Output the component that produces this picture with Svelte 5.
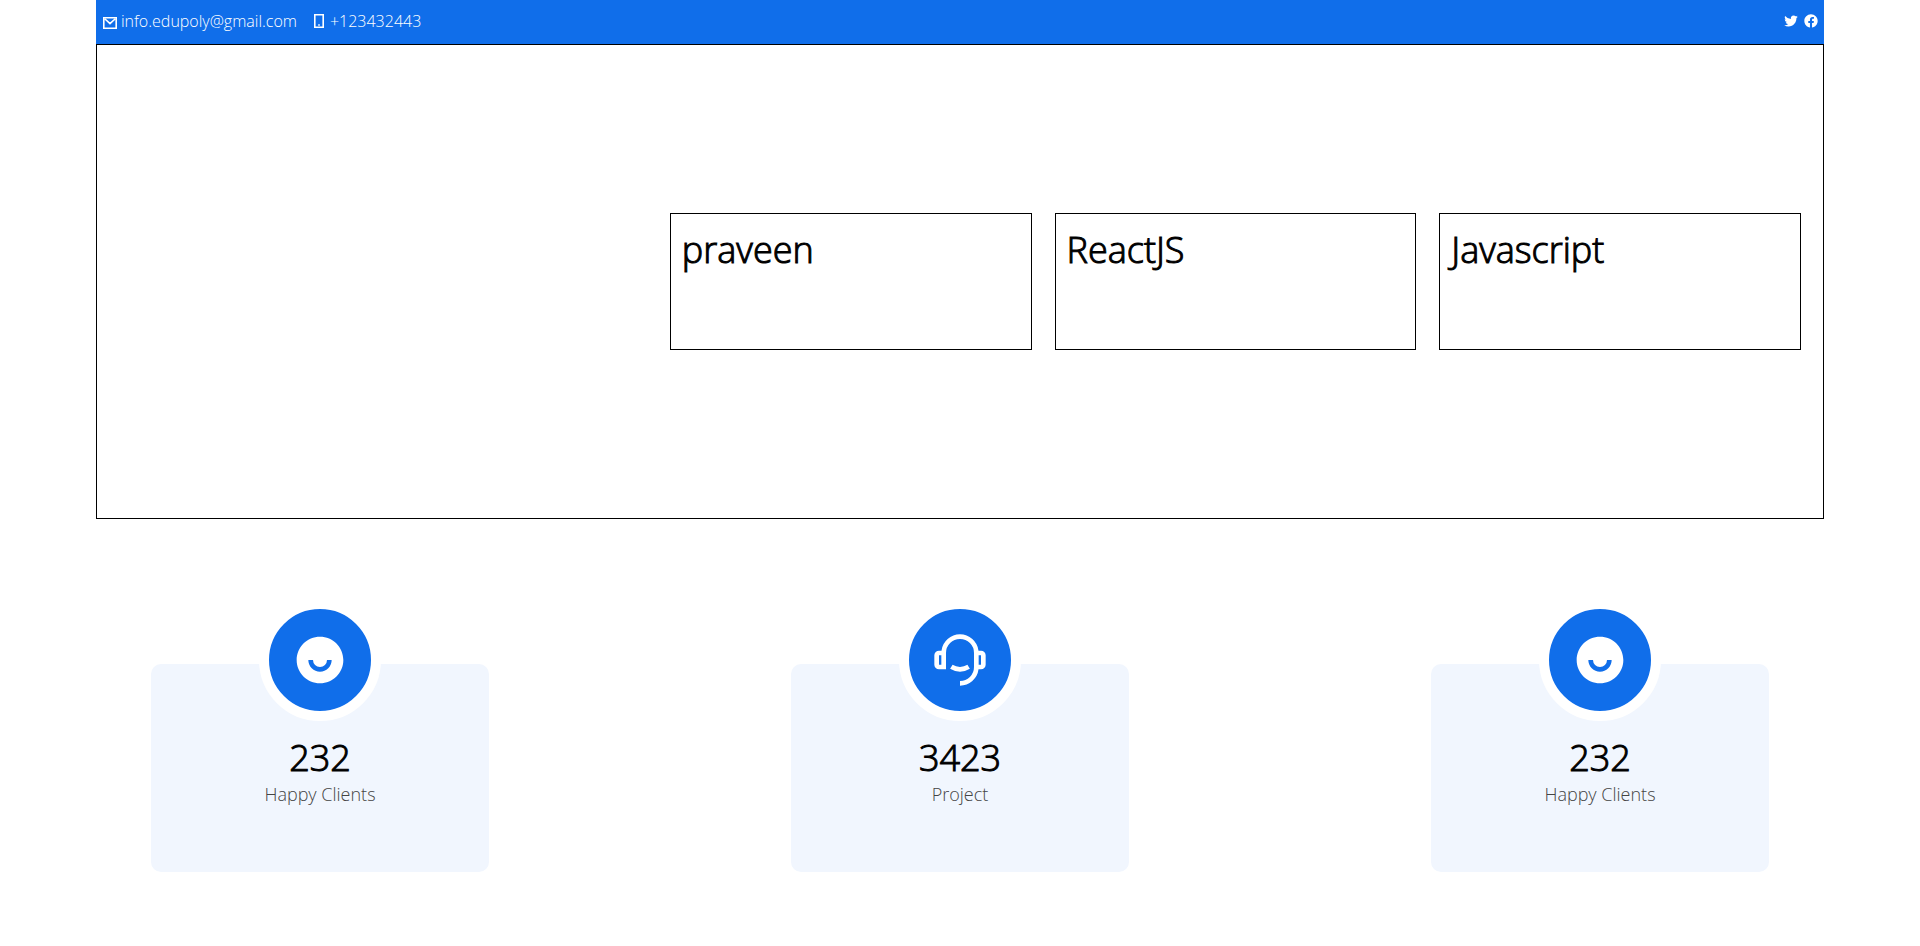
<script>
  const topics = ['praveen', 'ReactJS', 'Javascript'];
  const stats = [
    { icon: 'smile', value: 232, label: 'Happy Clients' },
    { icon: 'headset', value: 3423, label: 'Project' },
    { icon: 'smile', value: 232, label: 'Happy Clients' }
  ];
  const icons = {
    twitter: 'M22.162 5.656a8.384 8.384 0 0 1-2.402.658A4.196 4.196 0 0 0 21.6 4c-.82.488-1.719.83-2.656 1.015a4.182 4.182 0 0 0-7.126 3.814 11.874 11.874 0 0 1-8.62-4.37 4.168 4.168 0 0 0-.566 2.103c0 1.45.738 2.731 1.86 3.481a4.168 4.168 0 0 1-1.894-.523v.052a4.185 4.185 0 0 0 3.355 4.101 4.21 4.21 0 0 1-1.89.072A4.185 4.185 0 0 0 7.97 16.65a8.394 8.394 0 0 1-6.191 1.732 11.83 11.83 0 0 0 6.41 1.88c7.693 0 11.9-6.373 11.9-11.9 0-.18-.005-.362-.013-.54a8.496 8.496 0 0 0 2.087-2.165z',
    facebook: 'M12 2C6.477 2 2 6.477 2 12c0 4.991 3.657 9.128 8.438 9.879V14.89h-2.54V12h2.54V9.797c0-2.506 1.492-3.89 3.777-3.89 1.094 0 2.238.195 2.238.195v2.46h-1.26c-1.243 0-1.63.771-1.63 1.562V12h2.773l-.443 2.89h-2.33v6.989C18.343 21.129 22 16.99 22 12c0-5.523-4.477-10-10-10z',
    smile: 'M12 22C6.477 22 2 17.523 2 12S6.477 2 12 2s10 4.477 10 10-4.477 10-10 10zm-5-10a5 5 0 0 0 10 0h-2a3 3 0 0 1-6 0H7z',
    headset: 'M19.938 8H21a2 2 0 0 1 2 2v4a2 2 0 0 1-2 2h-1.062A8.001 8.001 0 0 1 12 23v-2a6 6 0 0 0 6-6V9A6 6 0 1 0 6 9v7H3a2 2 0 0 1-2-2v-4a2 2 0 0 1 2-2h1.062a8.001 8.001 0 0 1 15.876 0zM3 10v4h1v-4H3zm17 0v4h1v-4h-1zM7.76 15.785l1.06-1.696A5.972 5.972 0 0 0 12 15a5.972 5.972 0 0 0 3.18-.911l1.06 1.696A7.963 7.963 0 0 1 12 17a7.963 7.963 0 0 1-4.24-1.215z'
  };
</script>

{#snippet icon(name)}
  <svg class="icon" viewBox="0 0 24 24" aria-hidden="true"><path d={icons[name]} /></svg>
{/snippet}

<div class="container">
  <header class="topbar">
    <div class="contacts">
      <a href="mailto:info.edupoly@gmail.com">
        <svg class="icon line" viewBox="0 0 16 16" aria-hidden="true">
          <path d="M1.8 4.8h12.4v10.4H1.8zM3 6l5 4.6L13 6" />
        </svg>
        info.edupoly@gmail.com
      </a>
      <a href="tel:+123432443">
        <svg class="icon line" viewBox="0 0 16 16" aria-hidden="true">
          <path d="M3.8 1.8h8.4v12.4H3.8zM7.2 12h1.6" />
        </svg>
        +123432443
      </a>
    </div>
    <nav class="social" aria-label="Social media">
      <a href="#twitter" aria-label="Twitter">{@render icon('twitter')}</a>
      <a href="#facebook" aria-label="Facebook">{@render icon('facebook')}</a>
    </nav>
  </header>

  <section class="hero">
    {#each topics as topic}
      <article class="topic"><h2>{topic}</h2></article>
    {/each}
  </section>
</div>

<section class="stats">
  {#each stats as stat}
    <article class="stat">
      <div class="badge">{@render icon(stat.icon)}</div>
      <h2>{stat.value}</h2>
      <p>{stat.label}</p>
    </article>
  {/each}
</section>

<style>
  :global(body) {
    background: #fff;
    color: #000;
    font-family: 'Open Sans', 'Noto Sans', sans-serif;
    font-weight: 300;
  }
  .container {
    width: 90%;
    margin: 0 auto;
  }
  .icon {
    display: block;
    width: 16px;
    height: 16px;
    fill: currentColor;
  }
  .icon.line {
    fill: none;
    stroke: currentColor;
    stroke-width: 1.6;
  }
  .topbar {
    display: flex;
    justify-content: space-between;
    align-items: center;
    box-sizing: border-box;
    min-height: 44px;
    padding: 0 5px 2px 6px;
    background: #106eea;
    color: #fff;
    font-size: 16px;
    line-height: 24px;
  }
  .contacts {
    display: flex;
    gap: 14px;
  }
  .topbar a {
    display: flex;
    align-items: center;
    gap: 3px;
    color: inherit;
    text-decoration: none;
  }
  .social {
    display: flex;
    gap: 4px;
  }
  h2 {
    margin: 0;
    font-size: 36px;
    line-height: 48px;
    font-weight: 300;
    -webkit-text-stroke: 1px currentColor;
  }
  .hero {
    display: grid;
    grid-template-columns: repeat(3, 1fr);
    gap: 23px;
    padding: 168px 22px 168px 33.15%;
    border: 1px solid #000;
  }
  .topic {
    min-height: 111px;
    padding: 12px 11px;
    border: 1px solid #000;
  }
  .stats {
    display: grid;
    grid-template-columns: repeat(3, 1fr);
    justify-items: center;
    padding: 80px 0;
  }
  .stat {
    display: flex;
    flex-direction: column;
    align-items: center;
    box-sizing: border-box;
    width: 52.8%;
    margin-top: 65px;
    padding-bottom: 66px;
    border-radius: 10px;
    background: #f1f6fe;
    text-align: center;
  }
  .badge {
    display: grid;
    place-items: center;
    width: 102px;
    height: 102px;
    margin-top: -65px;
    margin-bottom: 13px;
    border: 10px solid #fff;
    border-radius: 50%;
    background: #106eea;
    color: #fff;
  }
  .badge .icon {
    width: 56px;
    height: 56px;
  }
  .stat p {
    margin: 0;
    color: #444;
    font-size: 18px;
    line-height: 24px;
  }
</style>
